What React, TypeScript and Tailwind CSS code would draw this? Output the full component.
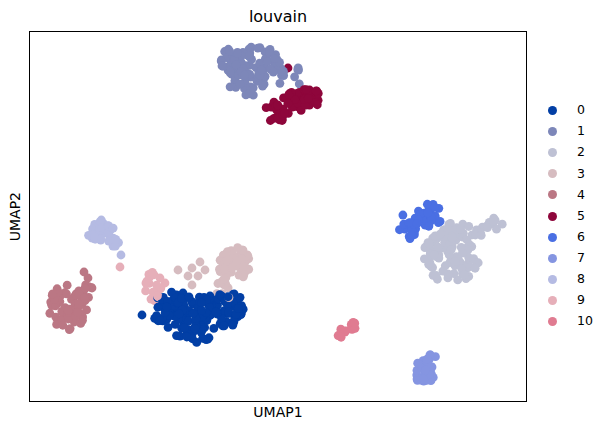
import React from "react";

type Blob = [number, number, number, number, number];
type Cluster = { color: string; blobs: Blob[]; singles: [number, number][] };

const COLORS = [
  "#023fa5",
  "#7d87b9",
  "#bec1d4",
  "#d6bcc0",
  "#bb7784",
  "#8e063b",
  "#4a6fe3",
  "#8595e1",
  "#b5bbe3",
  "#e6afb9",
  "#e07b91",
];

const CLUSTERS: Cluster[] = [
  {
    color: COLORS[0],
    blobs: [
      [198, 314, 46, 18, 110],
      [193, 334, 18, 10, 22],
      [226, 306, 19, 14, 28],
      [170, 301, 14, 10, 14],
    ],
    singles: [
      [142, 315],
      [183, 293],
      [210, 296],
    ],
  },
  {
    color: COLORS[1],
    blobs: [
      [249, 61, 31, 16, 72],
      [251, 83, 22, 13, 34],
      [278, 74, 7, 11, 10],
      [298, 76, 4, 9, 5],
    ],
    singles: [[222, 66]],
  },
  {
    color: COLORS[2],
    blobs: [
      [451, 257, 28, 26, 88],
      [458, 231, 17, 9, 16],
      [492, 224, 12, 6, 10],
      [478, 233, 5, 4, 4],
    ],
    singles: [],
  },
  {
    color: COLORS[3],
    blobs: [
      [233, 263, 18, 17, 50],
      [223, 289, 10, 12, 16],
    ],
    singles: [
      [178, 270],
      [192, 268],
      [200, 262],
      [205, 270],
      [192, 285],
      [198, 276],
      [188, 276],
    ],
  },
  {
    color: COLORS[4],
    blobs: [
      [68, 307, 19, 23, 58],
      [84, 291, 10, 9, 13],
    ],
    singles: [
      [84, 272],
      [88, 278],
      [92, 288],
    ],
  },
  {
    color: COLORS[5],
    blobs: [
      [302, 99, 19, 13, 44],
      [277, 111, 12, 12, 22],
    ],
    singles: [[288, 68]],
  },
  {
    color: COLORS[6],
    blobs: [
      [430, 215, 13, 12, 26],
      [408, 226, 11, 13, 20],
    ],
    singles: [],
  },
  {
    color: COLORS[7],
    blobs: [
      [425, 372, 10, 13, 30],
      [430, 357, 6, 5, 6],
    ],
    singles: [],
  },
  {
    color: COLORS[8],
    blobs: [
      [100, 230, 15, 12, 28],
      [112, 243, 8, 5, 7],
    ],
    singles: [[121, 255]],
  },
  {
    color: COLORS[9],
    blobs: [[153, 287, 8, 15, 18]],
    singles: [
      [160, 278],
      [165, 283],
      [120, 267],
    ],
  },
  {
    color: COLORS[10],
    blobs: [
      [342, 333, 5, 5, 7],
      [354, 326, 5, 4, 7],
    ],
    singles: [],
  },
];

function mulberry32(a: number) {
  return function () {
    a |= 0;
    a = (a + 0x6d2b79f5) | 0;
    let t = Math.imul(a ^ (a >>> 15), 1 | a);
    t = (t + Math.imul(t ^ (t >>> 7), 61 | t)) ^ t;
    return ((t ^ (t >>> 14)) >>> 0) / 4294967296;
  };
}

type Pt = { x: number; y: number; c: string };

function buildPoints(): Pt[] {
  const rng = mulberry32(12345);
  const pts: Pt[] = [];
  for (const cl of CLUSTERS) {
    for (const [cx, cy, rx, ry, n] of cl.blobs) {
      for (let i = 0; i < n; i++) {
        const a = rng() * Math.PI * 2;
        const r = Math.sqrt(rng());
        pts.push({ x: cx + rx * r * Math.cos(a), y: cy + ry * r * Math.sin(a), c: cl.color });
      }
    }
    for (const [x, y] of cl.singles) pts.push({ x, y, c: cl.color });
  }
  for (let i = pts.length - 1; i > 0; i--) {
    const j = Math.floor(rng() * (i + 1));
    const t = pts[i];
    pts[i] = pts[j];
    pts[j] = t;
  }
  return pts;
}

const POINTS = buildPoints();

export default function App() {
  return (
    <div className="w-[610px] h-[430px] bg-white text-black font-['DejaVu_Sans',sans-serif] overflow-hidden">
      <div className="h-[31px] w-[527px] pl-[29px] flex items-end justify-center pb-[6px]">
        <span className="text-[16px] leading-none">louvain</span>
      </div>
      <div className="flex h-[371px]">
        <div className="w-[29px] flex items-center justify-end pr-[7px]">
          <span className="text-[14px] leading-none [writing-mode:vertical-rl] rotate-180">UMAP2</span>
        </div>
        <div className="w-[498px] h-[371px] border border-black">
          <svg width="496" height="369" viewBox="30 32 496 369" className="block">
            {POINTS.map((p, i) => (
              <circle key={i} cx={p.x} cy={p.y} r={4.4} fill={p.c} />
            ))}
          </svg>
        </div>
        <div className="flex flex-col pt-[69px]">
          {COLORS.map((c, i) => (
            <div key={i} className="h-[21.1px] flex items-center">
              <span
                className="ml-[20.5px] w-[9px] h-[9px] rounded-full shrink-0"
                style={{ backgroundColor: c }}
              />
              <span className="ml-[20.5px] text-[12.5px] leading-none">{i}</span>
            </div>
          ))}
        </div>
      </div>
      <div className="w-[527px] pl-[29px] flex justify-center pt-[3px]">
        <span className="text-[14px] leading-none">UMAP1</span>
      </div>
    </div>
  );
}
